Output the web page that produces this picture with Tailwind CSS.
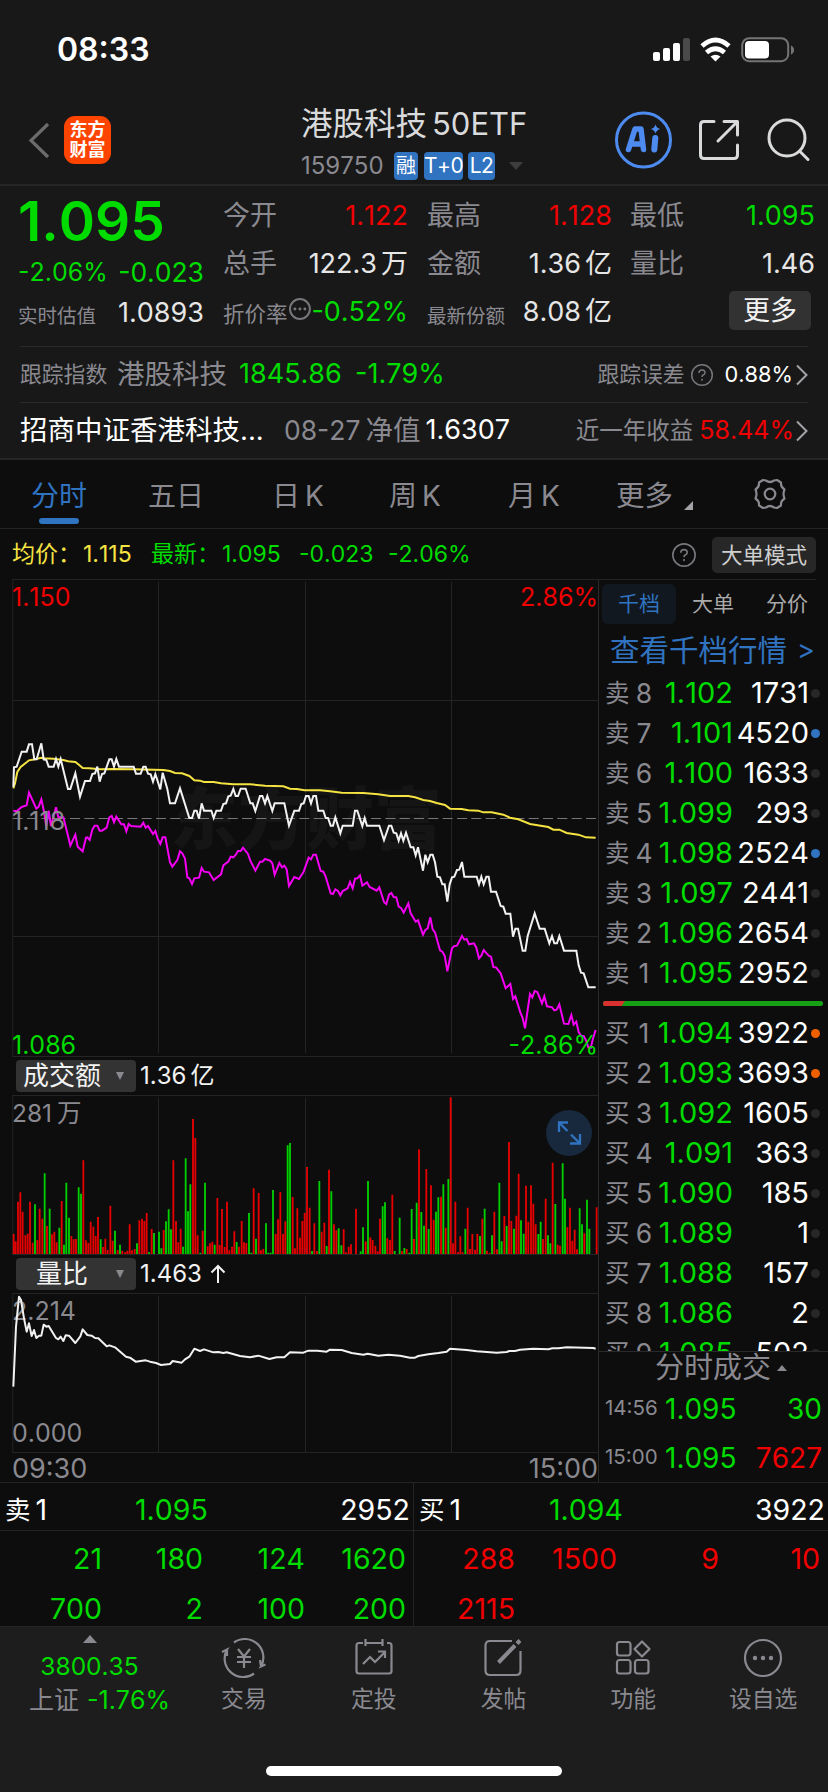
<!DOCTYPE html>
<html lang="zh-CN">
<head>
<meta charset="utf-8">
<title>港股科技50ETF</title>
<script src="https://cdn.jsdelivr.net/npm/@tailwindcss/browser@4"></script>
</head>
<body class="bg-[#0d0d0d]">
<div class="w-[828px] h-[1792px] overflow-hidden flex flex-col bg-[#0d0d0d] text-[#8a8990] font-[Inter,'Noto_Sans_CJK_SC',sans-serif] [font-kerning:none] whitespace-nowrap">

  <!-- status bar + title bar -->
  <header class="h-[186px] shrink-0 bg-[#181818] border-b-2 border-[#262626] flex flex-col">
    <div class="h-[100px] flex items-center pl-[57px] pr-[34px]">
      <span class="text-[32px] leading-[40px] font-semibold text-white">08:33</span>
      <svg class="ml-auto w-[142px] h-[28px]" viewBox="652 36 142 28">
        <g fill="#fff"><rect x="653" y="52" width="7" height="9" rx="2"/><rect x="663" y="48" width="7" height="13" rx="2"/><rect x="673" y="43" width="7" height="18" rx="2"/><rect x="683" y="38" width="7" height="23" rx="2" fill="#4a4a4a"/></g>
        <path d="M702 46Q715.500 34 729 46M706.500 52.500Q715.500 45 724.500 52.500" fill="none" stroke="#fff" stroke-width="4.800"/>
        <path d="M710.500 56.500Q715.500 52.800 720.500 56.500L715.500 61.500Z" fill="#fff"/>
        <rect x="742.200" y="38.200" width="46" height="23" rx="7" fill="none" stroke="#747474" stroke-width="2"/>
        <rect x="745" y="41" width="24" height="17.500" rx="4" fill="#fff"/>
        <path d="M791 45.500q3 1.500 3 4.500t-3 4.500z" fill="#747474"/>
      </svg>
    </div>
    <div class="h-[84px] flex items-start">
      <svg class="ml-[26px] mt-[21px] w-[26px] h-[38px]" viewBox="0 0 26 38"><path d="M22 3L5 19.500L22 36" fill="none" stroke="#6c6c6c" stroke-width="3.200"/></svg>
      <div class="ml-[12px] mt-[16px] w-[47px] h-[48px] rounded-[11px] bg-[#ff4400] flex flex-col items-center justify-center text-white font-bold text-[18px] leading-[20px]"><span>东方</span><span>财富</span></div>
      <div class="ml-[190px] mt-[3px] w-[231px]">
        <div class="flex text-[31.500px] leading-[41px] text-[#d9dadc]"><span>港股科技</span><span class="ml-[5px] text-[31px]">50ETF</span></div>
        <div class="flex items-center h-[43px] leading-[28px]">
          <span class="w-[93px] text-[24px]">159750</span>
          <span class="w-[24px] h-[28px] rounded-[4px] bg-[#3073c0] text-white text-[20px] text-center">融</span>
          <span class="ml-[6px] w-[39px] h-[28px] rounded-[4px] bg-[#3073c0] text-white text-[21px] text-center tracking-[-0.5px]">T+0</span>
          <span class="ml-[5px] w-[27px] h-[28px] rounded-[4px] bg-[#3073c0] text-white text-[21px] text-center tracking-[-0.5px]">L2</span>
          <svg class="ml-[14px] w-[14px] h-[8px]" viewBox="0 0 14 8"><path d="M0 0H14L7 8Z" fill="#3e3e3e"/></svg>
        </div>
      </div>
      <svg class="ml-[80px] mt-[8px] w-[64px] h-[64px]" viewBox="611 108 64 64">
        <circle cx="642.500" cy="140" r="27" fill="none" stroke="#4d8bf0" stroke-width="3"/>
        <path d="M627.500 149.500L634 129H640L642.500 149.500M632 144H641" fill="none" stroke="#4d8bf0" stroke-width="5.500" stroke-linejoin="round" stroke-linecap="round"/>
        <path d="M654.300 138L653.300 149.500" stroke="#4d8bf0" stroke-width="6" stroke-linecap="round"/>
        <path d="M654.500 124.500Q655.500 128 659 129Q655.500 130 654.500 133.500Q653.500 130 650 129Q653.500 128 654.500 124.500Z" fill="#4d8bf0"/>
      </svg>
      <svg class="ml-[19px] mt-[16px] w-[46px] h-[48px]" viewBox="694 116 46 48"><g fill="none" stroke="#d9dadc" stroke-width="3" stroke-linecap="round" stroke-linejoin="round"><path d="M713 121.500H703Q699.500 121.500 699.500 125V155Q699.500 158.500 703 158.500H733Q736.500 158.500 736.500 155V145"/><path d="M717 141L736 122M723 121.500H736.500V135"/></g></svg>
      <svg class="ml-[22px] mt-[14px] w-[48px] h-[50px]" viewBox="762 114 48 50"><circle cx="786" cy="138" r="18" fill="none" stroke="#d9dadc" stroke-width="3"/><path d="M798.500 151L807 159.500" stroke="#d9dadc" stroke-width="3" stroke-linecap="round"/></svg>
    </div>
  </header>

  <!-- quote summary -->
  <section class="h-[274px] shrink-0 bg-[#181818] border-b-2 border-[#262626] flex flex-col">
    <div class="h-[160px] flex">
      <div class="w-[204px] pl-[18px] flex flex-col">
        <div class="h-[64px] pt-[3px] text-[55px] leading-[64px] font-semibold text-[#00dc00]">1.095</div>
        <div class="h-[45px] flex items-center justify-between text-[#00dc00]"><span class="text-[25px]">-2.06%</span><span class="text-[26.500px]">-0.023</span></div>
        <div class="h-[36px] flex items-center justify-between"><span class="text-[19.500px] pt-[7px]">实时估值</span><span class="text-[27px] text-[#e6e6e6]">1.0893</span></div>
      </div>
      <div class="ml-[19px] w-[185px] pt-[6px] flex flex-col text-[27px] leading-[48px]">
        <div class="h-[48px] flex justify-between"><span>今开</span><span class="text-[#f00000]">1.122</span></div>
        <div class="h-[48px] flex justify-between"><span>总手</span><span class="text-[#e6e6e6]">122.3<span class="ml-[4px]">万</span></span></div>
        <div class="h-[48px] flex"><span class="text-[21.500px] pt-[2px]">折价率</span><svg class="mt-[9px] w-[24px] h-[24px]" viewBox="0 0 24 24"><circle cx="12" cy="12" r="10" fill="none" stroke="#77767b" stroke-width="2"/><circle cx="7" cy="12" r="1.500" fill="#77767b"/><circle cx="12" cy="12" r="1.500" fill="#77767b"/><circle cx="17" cy="12" r="1.500" fill="#77767b"/></svg><span class="ml-auto text-[#00dc00]">-0.52%</span></div>
      </div>
      <div class="ml-[19px] w-[185px] pt-[6px] flex flex-col text-[27px] leading-[48px]">
        <div class="h-[48px] flex justify-between"><span>最高</span><span class="text-[#f00000]">1.128</span></div>
        <div class="h-[48px] flex justify-between"><span>金额</span><span class="text-[#e6e6e6]">1.36<span class="ml-[4px]">亿</span></span></div>
        <div class="h-[48px] flex justify-between"><span class="text-[19.500px] pt-[4px]">最新份额</span><span class="text-[#e6e6e6]">8.08<span class="ml-[4px]">亿</span></span></div>
      </div>
      <div class="ml-[18px] w-[185px] pt-[6px] flex flex-col text-[27px] leading-[48px]">
        <div class="h-[48px] flex justify-between"><span>最低</span><span class="text-[#00dc00]">1.095</span></div>
        <div class="h-[48px] flex justify-between"><span>量比</span><span class="text-[#e6e6e6]">1.46</span></div>
        <div class="mt-[3px] ml-auto mr-[4px] w-[82px] h-[39px] rounded-[5px] bg-[#323232] text-[#f2f2f2] text-center leading-[39px]">更多</div>
      </div>
    </div>
    <div class="mx-[20px] h-[56px] border-t border-[#2a2a2a] flex items-center">
      <span class="w-[97px] text-[21.800px]">跟踪指数</span><span class="w-[122px] text-[27.500px]">港股科技</span>
      <span class="w-[116px] text-[27px]  text-[#00dc00]">1845.86</span><span class="text-[27px] text-[#00dc00]">-1.79%</span>
      <span class="ml-auto text-[21.800px]">跟踪误差</span>
      <svg class="ml-[5px] w-[24px] h-[24px]" viewBox="0 0 24 24"><circle cx="12" cy="12" r="10.300" fill="none" stroke="#77767b" stroke-width="1.500"/><path d="M9 10Q9 7 12 7T15 9.800Q15 11.300 12.800 12.200Q12 12.600 12 14" fill="none" stroke="#77767b" stroke-width="1.500"/><circle cx="12" cy="16.700" r="1" fill="#77767b"/></svg>
      <span class="ml-[11px] text-[21.800px] text-white">0.88%</span>
      <svg class="ml-[3px] w-[12px] h-[22px]" viewBox="0 0 12 22"><path d="M1 1.500L10.500 11L1 20.500" fill="none" stroke="#a3a2a8" stroke-width="2"/></svg>
    </div>
    <div class="mx-[20px] h-[56px] border-t border-[#2a2a2a] flex items-center">
      <span class="w-[264px] text-[27.500px] text-white">招商中证香港科技...</span><span class="text-[26.500px]">08-27</span><span class="ml-[5px] w-[60px] text-[27.500px]">净值</span><span class="text-[27px] text-white">1.6307</span>
      <span class="ml-auto text-[23.500px]">近一年收益</span><span class="ml-[6px] text-[25px] text-[#f00000]">58.44%</span>
      <svg class="ml-[2px] w-[12px] h-[22px]" viewBox="0 0 12 22"><path d="M1 1.500L10.500 11L1 20.500" fill="none" stroke="#a3a2a8" stroke-width="2"/></svg>
    </div>
  </section>

  <!-- period tabs -->
  <nav class="h-[69px] shrink-0 border-b border-[#242424] flex items-start text-[28px] leading-[72px]">
    <div class="ml-[31px] w-[117px] flex flex-col text-[#3073c0]"><span class="h-[58px]">分时</span><span class="ml-[8px] w-[40px] h-[6px] rounded-full bg-[#3073c0]"></span></div>
    <span class="w-[124px]">五日</span><span class="w-[117px] flex gap-[5px]"><span>日</span>K</span><span class="w-[119px] flex gap-[5px]"><span>周</span>K</span><span class="w-[108px] flex gap-[5px]"><span>月</span>K</span><span class="text-[28.500px]">更多</span>
    <svg class="ml-[11px] mt-[41px] w-[9px] h-[9px]" viewBox="0 0 9 9"><path d="M9 0V9H0Z" fill="#a3a2a8"/></svg>
    <svg class="ml-[59px] mt-[17px] w-[36px] h-[34px]" viewBox="-18 -17 36 34"><g fill="none" stroke="#8a8990" stroke-width="2.200"><path d="M-4 -13.500Q0 -10.500 4 -13.500L7 -14L11 -11.500Q10.500 -7 14.500 -4.500Q12.500 0 14.500 4.500Q10.500 7 11 11.500L7 14L4 13.500Q0 10.500 -4 13.500L-7 14L-11 11.500Q-10.500 7 -14.500 4.500Q-12.500 0 -14.500 -4.500Q-10.500 -7 -11 -11.500L-7 -14Z" stroke-linejoin="round"/><circle r="5.300"/></g></svg>
  </nav>

  <div class="h-[50px] shrink-0 pt-[1px] flex items-center text-[23px] text-[#00dc00]">
    <span class="ml-[12px] w-[71px] text-[#f5e342]">均价：</span><span class="w-[68px] text-[#f5e342]">1.115</span><span class="w-[71px]">最新：</span><span class="w-[77px]">1.095</span><span class="w-[89px]">-0.023</span><span>-2.06%</span>
    <svg class="ml-auto w-[26px] h-[26px]" viewBox="0 0 24 24"><circle cx="12" cy="12" r="10.300" fill="none" stroke="#77767b" stroke-width="1.500"/><path d="M9 10Q9 7 12 7T15 9.800Q15 11.300 12.800 12.200Q12 12.600 12 14" fill="none" stroke="#77767b" stroke-width="1.500"/><circle cx="12" cy="16.700" r="1" fill="#77767b"/></svg>
    <span class="ml-[15px] mr-[12px] w-[104px] h-[36px] rounded-[5px] bg-[#272727] text-[#cfcfcf] text-[21.500px] leading-[36px] text-center">大单模式</span>
  </div>

  <!-- charts + order book -->
  <main class="h-[903px] shrink-0 flex">
    <section class="w-[599px] border-r border-[#2a2a2a] flex flex-col">
      <div class="relative h-[477px] text-[25px] leading-[30px]">
        <span class="absolute left-[170px] top-[190px] text-[68px] leading-[100px] font-black text-[#151515]">东方财富</span>
        <svg class="absolute inset-0 w-[599px] h-[478px]" viewBox="0 27 1797 1434">
          <g fill="none" stroke="#242424" stroke-width="3"><path d="M37 28.500H1797M37 1459.500H1797M38.500 28V1459M38 391.500H1797M38 1099.500H1797M475.500 36V1450M916.500 36V1450M1354.500 36V1450"/></g>
          <path d="M38 745.500H1797" stroke="#77767b" stroke-width="3" stroke-dasharray="30 13" fill="none"/>
          <g fill="none" stroke-width="6" stroke-linejoin="miter">
            <path stroke="#f5e342" d="M40 655L45 640L52 606L62 591L87 571L105 568L124 563L131 565L160 566L190 570L204 574L226 576L235 583L248 594L268 595L300 598L340 597L400 598L490 600L510 603L525 609L546 610L568 618L583 631L600 632L612 636L641 636L663 640L700 643L750 643L795 647L850 649L870 656L890 657L914 661L960 661L990 664L1025 668L1090 669L1135 673L1170 678L1225 678L1245 682L1270 690L1290 693L1310 699L1335 705L1350 716L1385 717L1405 721L1435 722L1450 727L1475 727L1510 734L1530 743L1555 748L1590 762L1645 771L1660 779L1678 779L1700 789L1735 794L1758 802L1787 803"/>
            <path stroke="#f2f2f2" d="M40 650L42 592L50 590L65 545L80 545L87 523L96 523L103 568L110 568L124 520L131 568L139 570L146 590L161 590L168 567L175 590L182 567L204 657L211 657L226 610L240 680L255 633L270 633L277 612L285 610L292 590L299 635L306 612L313 610L328 568L335 568L342 590L349 567L357 590L401 590L408 611L422 611L430 590L437 590L444 611L452 613L459 635L466 612L481 658L488 608L502 657L510 700L525 700L540 655L568 744L576 744L583 722L590 722L597 746L605 700L612 722L634 722L641 744L649 722L663 722L670 702L678 700L685 679L692 677L700 657L707 678L714 678L722 656L737 656L751 700L758 700L766 723L780 678L787 678L795 700L802 678L817 723L824 700L853 700L867 767L883 722L897 722L904 702L911 700L918 678L926 678L933 700L940 678L948 678L955 722L970 722L977 744L984 744L992 767L999 767L1006 742L1021 790L1028 767L1058 767L1065 722L1072 722L1087 768L1094 744L1101 767L1138 767L1152 810L1167 767L1174 767L1181 788L1189 790L1196 812L1203 790L1210 812L1218 788L1232 832L1240 832L1247 856L1254 832L1269 902L1276 854L1283 877L1291 854L1298 854L1305 877L1312 920L1320 922L1327 943L1334 943L1342 995L1349 943L1356 922L1363 920L1371 900L1378 899L1386 876L1393 920L1430 920L1437 943L1444 920L1451 943L1459 920L1466 920L1473 965L1488 965L1502 1008L1510 1010L1517 1031L1531 1031L1539 1100L1546 1076L1554 1076L1568 1142L1576 1142L1583 1098L1604 1030L1619 1076L1634 1076L1648 1120L1656 1098L1663 1120L1671 1120L1678 1098L1692 1142L1729 1142L1736 1186L1743 1208L1751 1210L1765 1252L1787 1252"/>
            <path stroke="#f500f5" d="M40 722L50 724L65 711L80 706L87 668L109 716L116 710L124 688L131 720L139 768L146 722L153 768L168 712L175 742L190 742L204 797L211 827L226 794L233 830L248 844L258 803L262 802L269 810L277 779L284 767L292 767L299 782L306 782L320 773L328 742L335 738L342 757L349 740L364 763L372 763L379 784L386 762L393 768L422 770L430 758L437 773L444 768L459 792L466 783L473 806L481 822L488 802L496 802L510 877L517 890L532 870L540 844L547 850L555 866L562 922L568 925L576 942L583 925L597 923L605 894L612 905L627 907L641 930L663 913L670 886L685 875L692 860L700 862L707 855L714 843L722 843L729 833L744 852L751 872L766 902L780 875L787 875L795 867L810 872L817 880L824 914L838 879L846 892L853 887L860 898L867 948L883 921L897 927L911 905L926 863L933 868L940 854L948 854L962 903L970 905L977 920L992 970L999 972L1006 958L1014 963L1021 976L1028 963L1043 955L1050 936L1058 955L1065 926L1072 925L1080 916L1087 947L1101 937L1109 951L1130 962L1138 952L1152 996L1159 1002L1167 974L1174 969L1181 981L1189 982L1196 1010L1203 1014L1211 1028L1225 1000L1232 1030L1247 1055L1254 1051L1269 1094L1276 1080L1283 1075L1291 1042L1298 1078L1305 1087L1320 1141L1327 1145L1334 1157L1342 1204L1356 1135L1363 1128L1371 1127L1386 1098L1393 1109L1400 1107L1407 1123L1422 1120L1429 1133L1437 1165L1444 1157L1451 1140L1466 1157L1473 1160L1480 1191L1488 1192L1502 1210L1517 1255L1531 1242L1539 1287L1546 1279L1561 1327L1568 1344L1575 1375L1590 1272L1597 1282L1604 1263L1612 1266L1626 1300L1633 1279L1641 1309L1656 1312L1663 1321L1670 1319L1678 1303L1692 1361L1705 1362L1714 1335L1721 1364L1729 1355L1736 1386L1743 1397L1751 1398L1758 1411L1765 1432L1772 1434L1780 1402L1787 1380"/>
          </g>
        </svg>
        <span class="absolute left-[12px] top-[3px] text-[#f00000]">1.150</span>
        <span class="absolute right-0 top-[3px] text-[#f00000]">2.86%</span>
        <span class="absolute left-[12px] top-[227px]">1.118</span>
        <span class="absolute left-[12px] top-[451px] text-[#00dc00]">1.086</span>
        <span class="absolute right-0 top-[451px] text-[#00dc00]">-2.86%</span>
      </div>
      <div class="h-[39px] flex items-center">
        <div class="ml-[16px] w-[120px] h-[32px] rounded-[4px] bg-[#333333] flex items-center justify-between pl-[7px] pr-[12px]"><span class="text-[26px] text-[#f2f2f2] leading-[32px]">成交额</span><svg class="w-[8px] h-[8px]" viewBox="0 0 8 8"><path d="M0 0H8L4 8Z" fill="#8a8990"/></svg></div>
        <span class="ml-[4px] pt-[1px] text-[24px] text-[#f2f2f2]">1.36<span class="ml-[4px]">亿</span></span>
      </div>
      <div class="relative h-[159px] text-[24.500px] leading-[30px]">
        <svg class="absolute inset-0 w-[599px] h-[160px]" viewBox="0 135 1797 480">
          <path d="M37 136.500H1797M37 613.500H1797M38.500 136V613M475.500 143V612M916.500 143V612M1354.500 143V612" stroke="#242424" stroke-width="3" fill="none"/>
          <path id="up" stroke="#e60000" stroke-width="5.500" fill="none"/>
          <path id="down" stroke="#00d000" stroke-width="5.500" fill="none"/>
        </svg>
        <span class="absolute left-[12px] top-[3px]">281<span class="ml-[5px]">万</span></span>
        <svg class="absolute left-[546px] top-[15px] w-[46px] h-[46px]" viewBox="0 0 46 46"><circle cx="23" cy="23" r="23" fill="#18283d"/><path d="M13 22V12.500H22M13 12.500L21.500 21M34 24V33.500H24M34 33.500L25 24.500" stroke="#3073c0" stroke-width="2.300" fill="none"/></svg>
      </div>
      <div class="h-[39px] flex items-center">
        <div class="ml-[16px] w-[120px] h-[32px] rounded-[4px] bg-[#333333] flex items-center justify-between pl-[20px] pr-[12px]"><span class="text-[26px] text-[#f2f2f2] leading-[32px]">量比</span><svg class="w-[8px] h-[8px]" viewBox="0 0 8 8"><path d="M0 0H8L4 8Z" fill="#8a8990"/></svg></div>
        <span class="ml-[4px] pt-[1px] text-[24px] text-[#f2f2f2]">1.463</span>
        <svg class="ml-[8px] w-[16px] h-[20px]" viewBox="0 0 16 20"><path d="M8 19V2M1.500 8.500L8 2L14.500 8.500" stroke="#f2f2f2" stroke-width="2" fill="none"/></svg>
      </div>
      <div class="relative h-[159px] text-[25px] leading-[30px]">
        <span class="absolute left-[12px] top-[3px]">2.214</span>
        <svg class="absolute inset-0 w-[599px] h-[160px]" viewBox="0 729 1797 480">
          <path d="M37 730.500H1797M37 1207.500H1797M38.500 730V1207M475.500 737V1206M916.500 737V1206M1354.500 737V1206" stroke="#242424" stroke-width="3" fill="none"/>
          <path stroke="#f2f2f2" stroke-width="6" fill="none" stroke-linejoin="round" d="M40 1010L48 830L57 740L63 750L72 805L80 845L87 820L95 858L102 840L109 864L117 857L124 857L131 824L139 830L146 828L168 864L175 868L182 860L190 873L197 856L207 857L226 879L241 859L248 838L262 855L275 857L285 864L295 865L320 889L328 886L345 892L378 920L390 923L407 935L437 931L450 935L468 939L483 945L510 942L518 933L545 938L555 928L568 920L583 896L600 903L612 898L640 907L655 906L670 909L680 907L720 918L750 922L775 917L808 927L830 922L853 922L870 907L910 908L925 902L952 902L980 905L990 899L1025 900L1055 909L1090 914L1103 911L1135 917L1165 914L1200 917L1230 923L1245 923L1255 918L1285 913L1315 909L1340 905L1350 896L1400 900L1430 904L1490 908L1520 906L1528 903L1545 903L1560 899L1600 896L1645 898L1657 895L1675 895L1700 892L1780 894L1787 896"/>
        </svg>
        <span class="absolute left-[12px] top-[125px]">0.000</span>
      </div>
      <div class="h-[30px] flex items-center justify-between pl-[12px] pt-[3px] text-[27px] leading-[27px]"><span>09:30</span><span>15:00</span></div>
    </section>

    <aside class="w-[229px] flex flex-col">
      <div class="h-[48px] border-t border-[#242424] mr-[12px] flex items-center text-[21px] leading-[40px]">
        <span class="ml-[3px] shrink-0 w-[74px] h-[40px] rounded-[6px] bg-[#111820] text-[#3073c0] text-center">千档</span><span class="shrink-0 w-[74px] text-center text-[#a9a9a9]">大单</span><span class="shrink-0 w-[74px] text-center text-[#a9a9a9]">分价</span>
      </div>
      <div class="h-[46px] pl-[11px] flex items-center text-[29.500px] leading-[46px] text-[#3073c0]">查看千档行情<span class="ml-[10px] text-[27px]">&gt;</span></div>
      <div class="h-[678px] overflow-hidden">
        <div id="asks"></div>
        <div class="ml-[4px] mt-[8px] mb-[7px] w-[220px] h-[5px] flex rounded-full overflow-hidden bg-[#16a016]"><svg class="w-[24px] h-[5px]" viewBox="0 0 24 5"><path d="M0 0H22L18.500 5H0Z" fill="#d93030"/></svg></div>
        <div id="bids"></div>
      </div>
      <div class="h-[33px] border-t border-[#2a2a2a] flex items-center pl-[56px] text-[29px] leading-[32px]">分时成交<svg class="ml-[6px] w-[10px] h-[6px]" viewBox="0 0 10 6"><path d="M5 0L10 6H0Z" fill="#8a8990"/></svg></div>
      <div class="h-[49px] flex items-center pl-[6px] pr-[6px] text-[28px] text-[#00dc00]"><span class="w-[60px] text-[20.500px] text-[#8a8990]">14:56</span><span>1.095</span><span class="ml-auto">30</span></div>
      <div class="h-[49px] flex items-center pl-[6px] pr-[6px] text-[28px] text-[#00dc00]"><span class="w-[60px] text-[20.500px] text-[#8a8990]">15:00</span><span>1.095</span><span class="ml-auto text-[#f00000]">7627</span></div>
    </aside>
  </main>

  <!-- level-one queues -->
  <section class="h-[144px] shrink-0 border-t border-[#242424] flex text-[28.500px]">
    <div class="w-[414px] border-r border-[#242424]">
      <div class="h-[48px] pt-[8px] border-b border-[#242424] flex items-center pl-[5px] pr-[3px] text-white"><span class="w-[130px] flex items-center gap-[5px]"><span class="text-[25.500px]">卖</span>1</span><span class="text-[#00dc00]">1.095</span><span class="ml-auto">2952</span></div>
      <div class="grid grid-cols-[102px_101px_102px_101px] text-right leading-[50px] pt-[3px] text-[#00dc00]"><span>21</span><span>180</span><span>124</span><span>1620</span><span>700</span><span>2</span><span>100</span><span>200</span></div>
    </div>
    <div class="w-[414px]">
      <div class="h-[48px] pt-[8px] border-b border-[#242424] flex items-center pl-[5px] pr-[3px] text-white"><span class="w-[130px] flex items-center gap-[5px]"><span class="text-[25.500px]">买</span>1</span><span class="text-[#00dc00]">1.094</span><span class="ml-auto">3922</span></div>
      <div class="grid grid-cols-[101px_102px_102px_101px] text-right leading-[50px] pt-[3px] text-[#f00000]"><span>288</span><span>1500</span><span>9</span><span>10</span><span>2115</span></div>
    </div>
  </section>

  <!-- bottom toolbar -->
  <footer class="h-[166px] shrink-0 bg-[#1d1d1d] border-t border-[#242424] flex flex-col">
    <div class="h-[139px] flex">
      <div class="w-[179px] pt-[8px] flex flex-col items-center text-[24.500px] text-[#00dc00]">
        <svg class="w-[14px] h-[8px]" viewBox="0 0 14 8"><path d="M7 0L14 8H0Z" fill="#8a8990"/></svg>
        <span class="mt-[6px] leading-[34px]">3800.35</span>
        <span class="pl-[20px] leading-[35px] text-[25px]"><span class="text-[#8a8990] mr-[8px]">上证</span>-1.76%</span>
      </div>
      <div class="grid grid-cols-5 w-[649px] text-[22.800px] leading-[30px] text-center">
        <div class="pt-[8px] flex flex-col items-center"><svg class="w-[46px] h-[46px]" viewBox="-23 -23 46 46" fill="none" stroke="#8a8990" stroke-width="2.200"><path d="M-10 -15.500A18.500 18.500 0 0 1 17 8.500L21.500 6.500M10 15.500A18.500 18.500 0 0 1 -17 -8.500L-22 -6M17 8.500L16 2M-17 -8.500V-2"/><path d="M-6 -9L0 -1.500L6 -9M0 -1.500V10M-7 -1H7M-7 4H7"/></svg><span class="mt-[3px]">交易</span></div>
        <div class="pt-[8px] flex flex-col items-center"><svg class="w-[46px] h-[46px]" viewBox="-23 -23 46 46" fill="none" stroke="#8a8990" stroke-width="2.200"><path d="M-11 -15H-15Q-17.500 -15 -17.500 -12.500V13Q-17.500 15.500 -15 15.500H15Q17.500 15.500 17.500 13V-12.500Q17.500 -15 15 -15H13M-8 -15H9M-8.500 -19V-12M8.500 -19V-12"/><path d="M-11 6L-4 -1L1 4L11 -6M4 -6.500H11V0"/></svg><span class="mt-[3px]">定投</span></div>
        <div class="pt-[8px] flex flex-col items-center"><svg class="w-[46px] h-[46px]" viewBox="-23 -23 46 46" fill="none" stroke="#8a8990" stroke-width="2.200"><path d="M9 -17H-13Q-17.500 -17 -17.500 -12.500V12.500Q-17.500 17 -13 17H13Q17.500 17 17.500 12.500V-7"/><path d="M-4.500 4.500L12 -12.500M14 -14.500L17 -17.500" stroke-width="4"/></svg><span class="mt-[3px]">发帖</span></div>
        <div class="pt-[8px] flex flex-col items-center"><svg class="w-[46px] h-[46px]" viewBox="-23 -23 46 46" fill="none" stroke="#8a8990" stroke-width="2.200"><rect x="-16" y="-16" width="13.500" height="13.500" rx="2.500"/><rect x="-16" y="2" width="13.500" height="13.500" rx="2.500"/><rect x="2" y="2" width="13.500" height="13.500" rx="2.500"/><path d="M9 -16.500L16.500 -9L9 -1.500L1.500 -9Z" stroke-linejoin="round"/></svg><span class="mt-[3px]">功能</span></div>
        <div class="pt-[8px] flex flex-col items-center"><svg class="w-[46px] h-[46px]" viewBox="-23 -23 46 46" fill="none" stroke="#8a8990" stroke-width="2.200"><circle r="18"/><g fill="#8a8990" stroke="none"><circle cx="-8" r="2.200"/><circle r="2.200"/><circle cx="8" r="2.200"/></g></svg><span class="mt-[3px]">设自选</span></div>
      </div>
    </div>
    <div class="mx-auto w-[296px] h-[10px] rounded-full bg-white"></div>
  </footer>
</div>

<script>
  // order book: level, price, size, dot colour class
  const N = 'bg-[#272727]', B = 'bg-[#3073c0]', O = 'bg-[#f06000]';
  const asks = [[8,'1.102',1731,N],[7,'1.101',4520,B],[6,'1.100',1633,N],[5,'1.099',293,N],[4,'1.098',2524,B],[3,'1.097',2441,N],[2,'1.096',2654,N],[1,'1.095',2952,N]];
  const bids = [[1,'1.094',3922,O],[2,'1.093',3693,O],[3,'1.092',1605,N],[4,'1.091',363,N],[5,'1.090',185,N],[6,'1.089',1,N],[7,'1.088',157,N],[8,'1.086',2,N],[9,'1.085',502,N]];
  const row = (side, [level, price, size, dot]) =>
    `<div class="h-[40px] flex items-center pl-[6px] text-[29px] leading-[40px]">
      <span class="w-[30px] text-[24.500px]">${side}</span><span class="w-[18px] text-[26.500px] text-center">${level}</span>
      <span class="w-[80px] text-right text-[#00dc00]">${price}</span><span class="w-[76px] text-right text-white">${size}</span>
      <span class="ml-[2px] w-[9px] h-[9px] rounded-full ${dot}"></span></div>`;
  document.getElementById('asks').innerHTML = asks.map(r => row('卖', r)).join('');
  document.getElementById('bids').innerHTML = bids.map(r => row('买', r)).join('');

  // turnover bars as x:top pairs, baseline 612
  const up = '41:552 47:574 54:455 61:427 68:485 76:556 83:551 90:455 98:578 112:570 119:476 127:506 141:528 156:553 163:545 170:577 185:453 214:558 221:568 228:567 250:331 258:571 265:579 272:515 280:530 287:558 294:501 309:591 316:566 323:600 331:467 338:572 353:600 367:602 375:607 382:602 389:523 396:601 404:597 418:511 426:506 433:513 440:489 455:537 491:540 520:331 528:513 535:577 542:536 579:207 586:264 593:556 608:542 623:589 630:580 637:575 652:444 659:585 666:477 674:591 681:455 688:601 696:590 703:544 717:590 725:513 732:577 739:579 761:415 776:429 783:601 790:597 827:552 834:508 841:426 849:552 856:514 878:441 885:595 892:475 900:563 907:513 914:489 921:351 929:473 943:520 951:603 965:545 973:518 987:359 1002:523 1009:541 1031:538 1038:607 1046:590 1053:583 1068:476 1097:574 1111:562 1118:570 1126:587 1133:604 1140:506 1162:565 1170:570 1177:434 1206:603 1220:597 1242:567 1257:298 1279:357 1293:406 1301:509 1323:440 1337:533 1352:142 1359:580 1366:455 1374:606 1381:559 1388:607 1403:473 1410:597 1417:552 1425:599 1432:551 1447:506 1461:602 1469:608 1483:485 1491:598 1513:498 1527:276 1534:513 1549:497 1556:371 1578:407 1585:515 1593:406 1600:461 1607:523 1629:567 1637:446 1658:338 1673:584 1680:587 1702:532 1710:473 1717:572 1724:539 1731:598 1753:550 1790:472';
  const down = '105:463 134:370 149:476 178:533 192:584 199:398 207:503 236:412 243:431 302:568 345:542 360:584 411:580 447:607 462:549 477:545 484:595 498:514 506:478 513:538 549:590 557:325 564:484 571:403 601:608 615:398 644:584 710:576 747:489 754:608 768:566 798:520 805:608 812:608 819:420 863:286 870:279 936:603 958:393 980:588 994:424 1016:535 1024:586 1082:604 1089:532 1104:393 1148:469 1155:457 1184:603 1199:503 1213:594 1228:608 1235:477 1250:458 1264:486 1272:527 1286:537 1308:485 1315:442 1330:403 1345:387 1396:536 1440:558 1454:476 1476:556 1498:398 1505:574 1520:528 1542:536 1563:511 1571:551 1615:552 1622:515 1644:556 1651:580 1666:462 1688:340 1695:446 1739:475 1746:523 1761:449 1768:536';
  const bars = s => s.split(' ').map(p => p.split(':')).map(([x, y]) => `M${x} ${y}V612`).join('');
  document.getElementById('up').setAttribute('d', bars(up));
  document.getElementById('down').setAttribute('d', bars(down));
</script>
</body>
</html>
